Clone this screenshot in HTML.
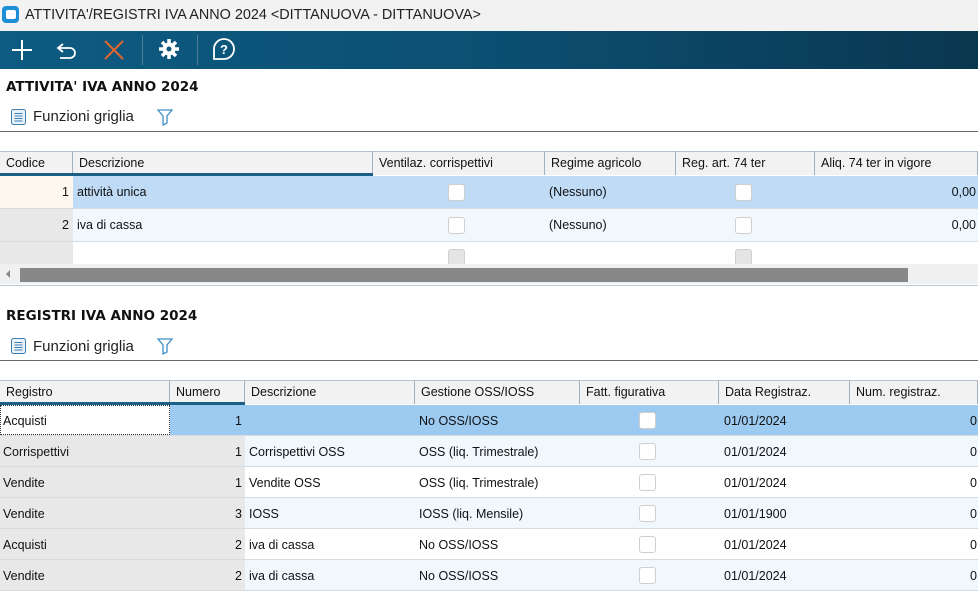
<!DOCTYPE html>
<html><head><meta charset="utf-8"><style>
*{margin:0;padding:0;box-sizing:border-box}
body{width:978px;height:590px;overflow:hidden;background:#fff;font-family:"Liberation Sans",Tahoma,sans-serif;font-size:12.5px;color:#111;position:relative}
.a{position:absolute}
.t{position:absolute;white-space:nowrap;line-height:16px}
.cb{position:absolute;width:17px;height:17px;border:1.5px solid #cfcfcf;border-radius:3px;background:#fff}
.hd{position:absolute;height:24px;background:#f2f2f2;border-top:1px solid #b7c3cf;border-right:1px solid #9fb0c0;padding:4px 0 0 6px;font-size:12.5px;white-space:nowrap;overflow:hidden}
.r{position:absolute;left:0;width:978px;border-bottom:1px solid #d6dce3}
.c{position:absolute;top:0;bottom:0}
.st{position:absolute;white-space:nowrap;font-family:"DejaVu Sans",sans-serif;font-weight:bold;font-size:13.5px;line-height:16px}
</style></head><body>
<div class="a" style="left:0;top:0;width:978px;height:31px;background:#f2f2f2"></div>
<div class="a" style="left:2px;top:6px;width:17px;height:17px;border-radius:4px;background:#1c8fd6"></div>
<div class="a" style="left:6px;top:10px;width:10px;height:9px;border-radius:2px;background:#fff"></div>
<div class="t" style="left:25px;top:6px;font-size:14.4px;line-height:18px;color:#222">ATTIVITA'/REGISTRI IVA ANNO 2024 &lt;DITTANUOVA - DITTANUOVA&gt;</div>
<div class="a" style="left:0;top:31px;width:978px;height:38px;background:linear-gradient(90deg,#0d5b82 0%,#0c4f72 50%,#0a3750 100%)"></div>
<svg class="a" style="left:0;top:31px" width="250" height="38">
<path d="M22 9v20M12 19h20" stroke="#fff" stroke-width="2" fill="none"/>
<path d="M63 13l-5 4 5 4M58 17h12a5 5 0 0 1 0 10h-10" stroke="#fff" stroke-width="1.8" fill="none"/>
<path d="M105 10l18 18M123 10l-18 18" stroke="#e0662d" stroke-width="2" fill="none"/>
<line x1="142.5" y1="4" x2="142.5" y2="34" stroke="#4f7d98"/>
<line x1="197.5" y1="4" x2="197.5" y2="34" stroke="#4f7d98"/>
<circle cx="169" cy="18" r="6.5" fill="#fff"/>
<g stroke="#fff" stroke-width="3.5"><path d="M169 8v20M159 18h20M162 11l14 14M176 11l-14 14"/></g>
<circle cx="169" cy="18" r="2.5" fill="#0c5478"/>
<path d="M224 28a10 10 0 1 0-10-10v10z" stroke="#fff" stroke-width="1.8" fill="none"/>
<text x="224" y="23" fill="#fff" font-size="13" font-family="Liberation Sans" text-anchor="middle" font-weight="bold">?</text>
</svg>
<div class="st" style="left:6px;top:79px">ATTIVITA' IVA ANNO 2024</div>
<svg class="a" style="left:10px;top:108px" width="170" height="20">
<rect x="1.5" y="1.5" width="14" height="15" rx="2" fill="#e8f2fb" stroke="#3f7fb0"/>
<path d="M4.5 5.5h8M4.5 8h8M4.5 10.5h8M4.5 13h8" stroke="#3f7fb0"/>
<path d="M148 2h14l-5 6v7l-4 2v-9z" fill="none" stroke="#3f8fc4" stroke-width="1.3"/>
</svg>
<div class="t" style="left:33px;top:109px;font-size:15px;color:#222">Funzioni griglia</div>
<div class="a" style="left:0;top:131px;width:978px;height:1px;background:#666"></div>
<div class="hd" style="left:0;top:151px;width:73px">Codice</div>
<div class="hd" style="left:73px;top:151px;width:300px">Descrizione</div>
<div class="hd" style="left:373px;top:151px;width:172px">Ventilaz. corrispettivi</div>
<div class="hd" style="left:545px;top:151px;width:131px">Regime agricolo</div>
<div class="hd" style="left:676px;top:151px;width:139px">Reg. art. 74 ter</div>
<div class="hd" style="left:815px;top:151px;width:163px">Aliq. 74 ter in vigore</div>
<div class="a" style="left:0;top:173px;width:373px;height:3px;background:#1b5f86"></div>
<div class="r" style="top:176px;height:33px;background:#bfdbf5"><div class="c" style="left:0;width:73px;background:#fdf8ee"></div></div>
<div class="t" style="left:0;width:69px;text-align:right;top:184px">1</div>
<div class="t" style="left:77px;top:184px">attività unica</div>
<div class="cb" style="left:448px;top:184px"></div>
<div class="t" style="left:549px;top:184px">(Nessuno)</div>
<div class="cb" style="left:735px;top:184px"></div>
<div class="t" style="left:900px;width:76px;text-align:right;top:184px">0,00</div>
<div class="r" style="top:209px;height:33px;background:#f0f7fd"><div class="c" style="left:0;width:73px;background:#e8e8e8"></div></div>
<div class="t" style="left:0;width:69px;text-align:right;top:217px">2</div>
<div class="t" style="left:77px;top:217px">iva di cassa</div>
<div class="cb" style="left:448px;top:217px"></div>
<div class="t" style="left:549px;top:217px">(Nessuno)</div>
<div class="cb" style="left:735px;top:217px"></div>
<div class="t" style="left:900px;width:76px;text-align:right;top:217px">0,00</div>
<div class="a" style="left:0;top:242px;width:73px;height:23px;background:#e8e8e8"></div>
<div class="cb" style="left:448px;top:249px;background:#e4e4e4"></div>
<div class="cb" style="left:735px;top:249px;background:#e4e4e4"></div>
<div class="a" style="left:0;top:264px;width:978px;height:20px;background:#f0f0f0"></div>
<div class="a" style="left:6px;top:270px;width:0;height:0;border-top:4px solid transparent;border-bottom:4px solid transparent;border-right:4px solid #888"></div>
<div class="a" style="left:20px;top:268px;width:888px;height:14px;background:#878787"></div>
<div class="a" style="left:0;top:285px;width:978px;height:1px;background:#b9c5d0"></div>
<div class="st" style="left:6px;top:308px">REGISTRI IVA ANNO 2024</div>
<svg class="a" style="left:10px;top:337px" width="170" height="20">
<rect x="1.5" y="1.5" width="14" height="15" rx="2" fill="#e8f2fb" stroke="#3f7fb0"/>
<path d="M4.5 5.5h8M4.5 8h8M4.5 10.5h8M4.5 13h8" stroke="#3f7fb0"/>
<path d="M148 2h14l-5 6v7l-4 2v-9z" fill="none" stroke="#3f8fc4" stroke-width="1.3"/>
</svg>
<div class="t" style="left:33px;top:339px;font-size:15px;color:#222">Funzioni griglia</div>
<div class="a" style="left:0;top:360px;width:978px;height:1px;background:#666"></div>
<div class="hd" style="left:0;top:380px;width:170px">Registro</div>
<div class="hd" style="left:170px;top:380px;width:75px">Numero</div>
<div class="hd" style="left:245px;top:380px;width:170px">Descrizione</div>
<div class="hd" style="left:415px;top:380px;width:165px">Gestione OSS/IOSS</div>
<div class="hd" style="left:580px;top:380px;width:139px">Fatt. figurativa</div>
<div class="hd" style="left:719px;top:380px;width:131px">Data Registraz.</div>
<div class="hd" style="left:850px;top:380px;width:128px">Num. registraz.</div>
<div class="a" style="left:0;top:402px;width:245px;height:3px;background:#1b5f86"></div>
<div class="r" style="top:405px;height:31px;background:#9ccaf1"><div class="c" style="left:0;width:170px;background:#fff;border:1px dotted #333"></div></div>
<div class="r" style="top:436px;height:31px;background:#f0f7fd"><div class="c" style="left:0;width:245px;background:#e8e8e8"></div></div>
<div class="r" style="top:467px;height:31px;background:#fff"><div class="c" style="left:0;width:245px;background:#e8e8e8"></div></div>
<div class="r" style="top:498px;height:31px;background:#f0f7fd"><div class="c" style="left:0;width:245px;background:#e8e8e8"></div></div>
<div class="r" style="top:529px;height:31px;background:#fff"><div class="c" style="left:0;width:245px;background:#e8e8e8"></div></div>
<div class="r" style="top:560px;height:31px;background:#f0f7fd"><div class="c" style="left:0;width:245px;background:#e8e8e8"></div></div>

<div class="t" style="left:3px;top:413px">Acquisti</div><div class="t" style="left:170px;width:72px;text-align:right;top:413px">1</div><div class="t" style="left:419px;top:413px">No OSS/IOSS</div><div class="cb" style="left:639px;top:412px"></div><div class="t" style="left:724px;top:413px">01/01/2024</div><div class="t" style="left:970px;top:413px">0</div>
<div class="t" style="left:3px;top:444px">Corrispettivi</div><div class="t" style="left:170px;width:72px;text-align:right;top:444px">1</div><div class="t" style="left:249px;top:444px">Corrispettivi OSS</div><div class="t" style="left:419px;top:444px">OSS (liq. Trimestrale)</div><div class="cb" style="left:639px;top:443px"></div><div class="t" style="left:724px;top:444px">01/01/2024</div><div class="t" style="left:970px;top:444px">0</div>
<div class="t" style="left:3px;top:475px">Vendite</div><div class="t" style="left:170px;width:72px;text-align:right;top:475px">1</div><div class="t" style="left:249px;top:475px">Vendite OSS</div><div class="t" style="left:419px;top:475px">OSS (liq. Trimestrale)</div><div class="cb" style="left:639px;top:474px"></div><div class="t" style="left:724px;top:475px">01/01/2024</div><div class="t" style="left:970px;top:475px">0</div>
<div class="t" style="left:3px;top:506px">Vendite</div><div class="t" style="left:170px;width:72px;text-align:right;top:506px">3</div><div class="t" style="left:249px;top:506px">IOSS</div><div class="t" style="left:419px;top:506px">IOSS (liq. Mensile)</div><div class="cb" style="left:639px;top:505px"></div><div class="t" style="left:724px;top:506px">01/01/1900</div><div class="t" style="left:970px;top:506px">0</div>
<div class="t" style="left:3px;top:537px">Acquisti</div><div class="t" style="left:170px;width:72px;text-align:right;top:537px">2</div><div class="t" style="left:249px;top:537px">iva di cassa</div><div class="t" style="left:419px;top:537px">No OSS/IOSS</div><div class="cb" style="left:639px;top:536px"></div><div class="t" style="left:724px;top:537px">01/01/2024</div><div class="t" style="left:970px;top:537px">0</div>
<div class="t" style="left:3px;top:568px">Vendite</div><div class="t" style="left:170px;width:72px;text-align:right;top:568px">2</div><div class="t" style="left:249px;top:568px">iva di cassa</div><div class="t" style="left:419px;top:568px">No OSS/IOSS</div><div class="cb" style="left:639px;top:567px"></div><div class="t" style="left:724px;top:568px">01/01/2024</div><div class="t" style="left:970px;top:568px">0</div>
</body></html>
